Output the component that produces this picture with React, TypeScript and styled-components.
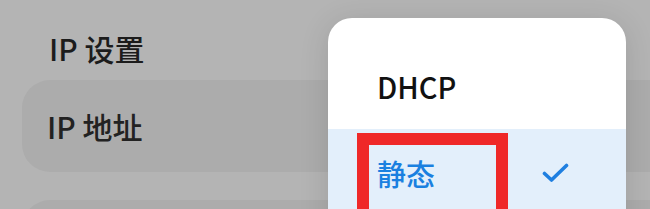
import React from "react";
import styled, { createGlobalStyle } from "styled-components";

const Global = createGlobalStyle`
  html, body { margin: 0; padding: 0; }
  body { font-family: "Noto Sans CJK SC", "Noto Sans", sans-serif; }
`;

const Page = styled.div`
  position: relative;
  width: 650px;
  height: 209px;
  overflow: hidden;
  background: #b4b4b4;
  display: flex;
  flex-direction: column;
  padding: 0 0 0 22px;
  box-sizing: border-box;
`;

const SectionTitle = styled.div`
  flex-shrink: 0;
  font-size: 30px;
  font-weight: 500;
  color: #1c1c1c;
  line-height: 40px;
  height: 80px;
  padding: 28px 0 0 27px;
  box-sizing: border-box;
`;

const Card = styled.div<{ $height: number; $mt?: number }>`
  height: ${(p) => p.$height}px;
  margin-top: ${(p) => p.$mt ?? 0}px;
  margin-right: -40px;
  border-radius: 28px;
  background: #acacac;
  display: flex;
  align-items: center;
  padding-left: 25px;
  flex-shrink: 0;
`;

const CardLabel = styled.span`
  font-size: 30px;
  font-weight: 500;
  color: #222;
  line-height: 40px;
`;

const Menu = styled.div`
  position: absolute;
  left: 328px;
  top: 18px;
  width: 298px;
  height: 240px;
  background: #fff;
  border-radius: 24px;
  overflow: hidden;
  box-shadow: 0 4px 30px rgba(0, 0, 0, 0.12);
  padding-top: 24px;
  box-sizing: border-box;
  display: flex;
  flex-direction: column;
`;

const Option = styled.div<{ $selected?: boolean }>`
  position: relative;
  height: 87px;
  flex-shrink: 0;
  display: flex;
  align-items: center;
  justify-content: space-between;
  padding: 0 57px 0 49px;
  background: ${(p) => (p.$selected ? "#e3effb" : "transparent")};
`;

const OptionLabel = styled.span<{ $selected?: boolean }>`
  font-size: 29px;
  font-weight: 500;
  line-height: 40px;
  color: ${(p) => (p.$selected ? "#1a80e0" : "#111")};
`;

const Highlight = styled.div`
  position: absolute;
  left: 29px;
  top: 4px;
  width: 151px;
  height: 110px;
  border: 12px solid #ef2828;
  box-sizing: border-box;
`;

const Check = () => (
  <svg width="27" height="20" viewBox="0 0 27 20" fill="none">
    <path
      d="M2.5 10.5 L9.5 17 L24.5 2.5"
      stroke="#1f7fe0"
      strokeWidth="3.6"
      strokeLinecap="round"
      strokeLinejoin="round"
    />
  </svg>
);

export default function App() {
  return (
    <>
      <Global />
      <Page>
        <SectionTitle>IP 设置</SectionTitle>
        <Card $height={92}>
          <CardLabel>IP 地址</CardLabel>
        </Card>
        <Card $height={92} $mt={28} />
        <Menu>
          <Option>
            <OptionLabel>DHCP</OptionLabel>
          </Option>
          <Option $selected>
            <OptionLabel $selected>静态</OptionLabel>
            <Check />
            <Highlight />
          </Option>
        </Menu>
      </Page>
    </>
  );
}
